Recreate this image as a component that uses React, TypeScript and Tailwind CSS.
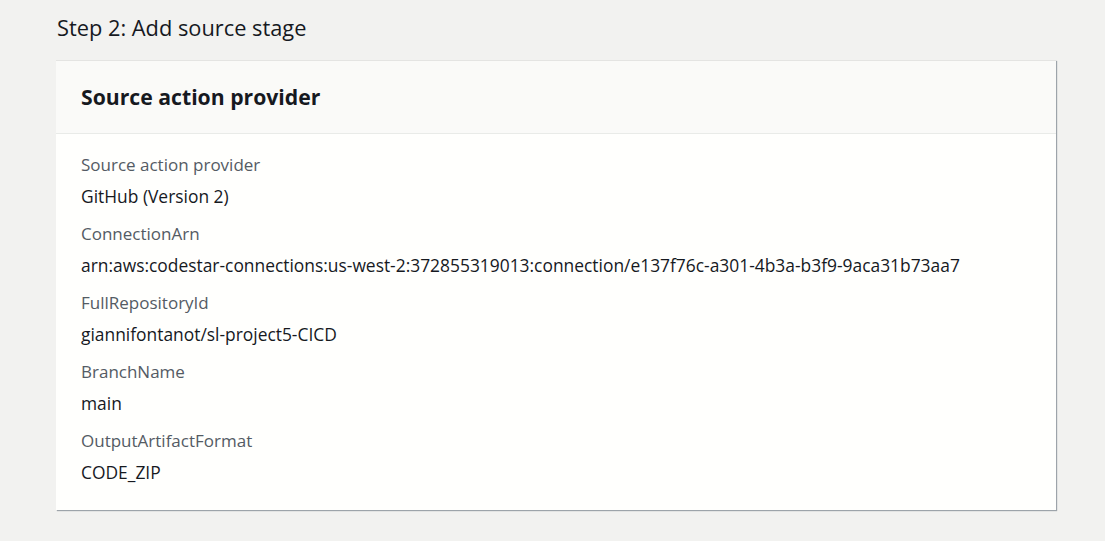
const fields = [
  { label: "Source action provider", value: "GitHub (Version 2)" },
  {
    label: "ConnectionArn",
    value:
      "arn:aws:codestar-connections:us-west-2:372855319013:connection/e137f76c-a301-4b3a-b3f9-9aca31b73aa7",
  },
  { label: "FullRepositoryId", value: "giannifontanot/sl-project5-CICD" },
  { label: "BranchName", value: "main" },
  { label: "OutputArtifactFormat", value: "CODE_ZIP" },
];

export default function App() {
  return (
    <div className="w-[1105px] h-[541px] bg-[#f2f2f0] pl-[56px] pt-[14px] font-['Open_Sans',sans-serif] text-[#16191f]">
      <h2 className="text-[21.8px] leading-[28px] pl-px text-[#16191f]">Step 2: Add source stage</h2>
      <div className="mt-[18px] w-[1000px] border-t border-[#e4e4e2] shadow-[1px_1px_1px_0_rgba(0,20,40,0.35)] bg-[#fffffd]">
        <div className="h-[73px] flex items-center px-[25px] bg-[#fafaf8] border-b border-[#e9ebe8]">
          <h3 className="text-[21.2px] font-bold">Source action provider</h3>
        </div>
        <div className="px-[25px] pt-[20px] pb-[27px] flex flex-col gap-[16px]">
          {fields.map((f) => (
            <div key={f.label}>
              <div className="text-[17px] leading-[22px] text-[#545b64]">{f.label}</div>
              <div className="mt-[9px] text-[17.4px] leading-[22px]">{f.value}</div>
            </div>
          ))}
        </div>
      </div>
    </div>
  );
}
